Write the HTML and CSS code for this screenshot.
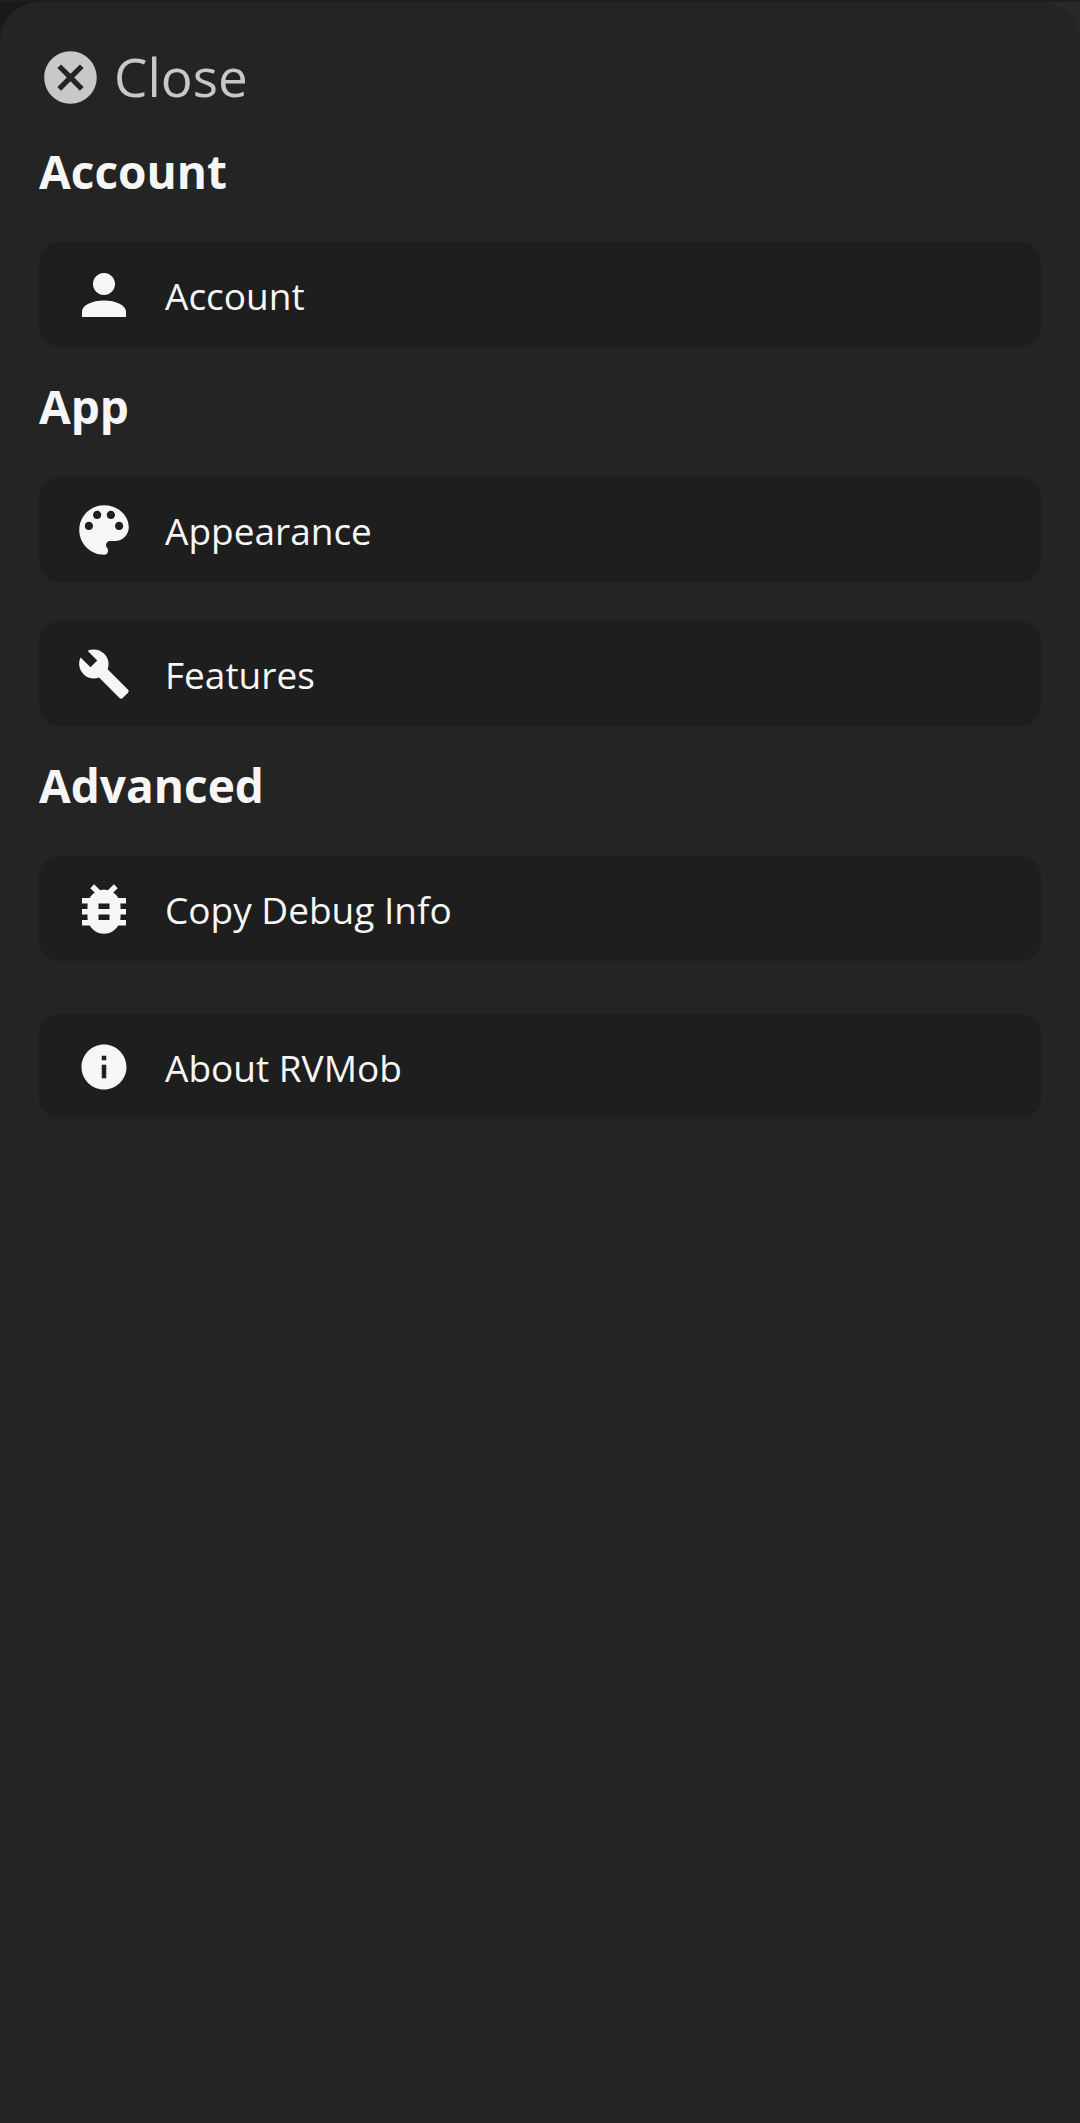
FILE: index.html
```
<!DOCTYPE html>
<html lang="en">
<head>
<meta charset="utf-8">
<meta name="viewport" content="width=device-width, initial-scale=1">
<title>Settings</title>
<link rel="stylesheet" href="styles.css">
</head>
<body>
<main class="sheet">
  <button class="close" type="button">
    <svg class="close-icon" viewBox="0 0 24 24" aria-hidden="true"><path d="M12 2C6.470 2 2 6.470 2 12s4.470 10 10 10 10-4.470 10-10S17.530 2 12 2zm5 13.590L15.590 17 12 13.410 8.410 17 7 15.590 10.590 12 7 8.410 8.410 7 12 10.590 15.590 7 17 8.410 13.410 12 17 15.590z"/></svg>
    <span>Close</span>
  </button>

  <section class="group">
    <h2 class="heading">Account</h2>
    <button class="item" type="button">
      <span class="icon-box"><svg class="icon" viewBox="0 0 24 24" aria-hidden="true"><path d="M12 12c2.210 0 4-1.790 4-4s-1.790-4-4-4-4 1.790-4 4 1.790 4 4 4zm0 2c-4.420 0-8 1.790-8 4v2h16v-2c0-2.210-3.580-4-8-4z"/></svg></span>
      <span class="label">Account</span>
    </button>
  </section>

  <section class="group">
    <h2 class="heading">App</h2>
    <button class="item" type="button">
      <span class="icon-box"><svg class="icon" viewBox="0 0 24 24" aria-hidden="true"><path d="M12 3c-4.970 0-9 4.030-9 9s4.030 9 9 9c.83 0 1.500-.67 1.500-1.500 0-.39-.15-.74-.39-1.010-.23-.26-.38-.61-.38-.99 0-.83.67-1.500 1.500-1.500H16c2.760 0 5-2.240 5-5 0-4.420-4.030-8-9-8zm-5.500 9c-.83 0-1.500-.67-1.500-1.500S5.670 9 6.500 9 8 9.670 8 10.500 7.330 12 6.500 12zm3-4C8.670 8 8 7.330 8 6.500S8.670 5 9.500 5s1.500.67 1.500 1.500S10.330 8 9.500 8zm5 0c-.83 0-1.500-.67-1.500-1.500S13.670 5 14.500 5s1.500.67 1.500 1.500S15.330 8 14.500 8zm3 4c-.83 0-1.500-.67-1.500-1.500S16.670 9 17.500 9s1.500.67 1.500 1.500-.67 1.500-1.500 1.500z"/></svg></span>
      <span class="label">Appearance</span>
    </button>
    <button class="item" type="button">
      <span class="icon-box"><svg class="icon-small" viewBox="0 0 24 24" aria-hidden="true"><path d="M22.700 19l-9.100-9.100c.9-2.300.4-5-1.500-6.900-2-2-5-2.400-7.400-1.300L9 6 6 9 1.600 4.700C.4 7.100.9 10.100 2.900 12.100c1.900 1.900 4.600 2.400 6.900 1.500l9.100 9.100c.4.4 1 .4 1.400 0l2.300-2.300c.5-.4.5-1.100.1-1.400z"/></svg></span>
      <span class="label">Features</span>
    </button>
  </section>

  <section class="group">
    <h2 class="heading">Advanced</h2>
    <button class="item" type="button">
      <span class="icon-box"><svg class="icon" viewBox="0 0 24 24" aria-hidden="true"><path d="M20 8h-2.810c-.45-.78-1.070-1.450-1.820-1.960L17 4.410 15.590 3l-2.170 2.170C12.960 5.060 12.490 5 12 5s-.96.06-1.410.17L8.410 3 7 4.410l1.620 1.630C7.880 6.550 7.260 7.220 6.810 8H4v2h2.090c-.05.33-.09.66-.09 1v1H4v2h2v1c0 .34.04.67.09 1H4v2h2.810c1.040 1.790 2.970 3 5.190 3s4.150-1.210 5.190-3H20v-2h-2.090c.05-.33.09-.66.09-1v-1h2v-2h-2v-1c0-.34-.04-.67-.09-1H20V8zm-6 8h-4v-2h4v2zm0-4h-4v-2h4v2z"/></svg></span>
      <span class="label">Copy Debug Info</span>
    </button>
  </section>

  <footer class="about">
    <button class="item" type="button">
      <span class="icon-box"><svg class="icon-small" viewBox="0 0 24 24" aria-hidden="true"><path d="M12 2C6.480 2 2 6.480 2 12s4.480 10 10 10 10-4.480 10-10S17.520 2 12 2zm1 15h-2v-6h2v6zm0-8h-2V7h2v2z"/></svg></span>
      <span class="label">About RVMob</span>
    </button>
  </footer>
</main>
</body>
</html>
```
FILE: styles.css
```
* {
  box-sizing: border-box;
}

body {
  margin: 0;
  min-height: 100vh;
  display: flex;
  flex-direction: column;
  border-top: 2px solid #1e1e1e;
  background: linear-gradient(to right, #191919 50%, #282828 50%);
  color: #f6f6f6;
  font-family: "Open Sans", "Noto Sans", sans-serif;
}

.sheet {
  flex: 1;
  padding: 40px 39px;
  border-radius: 39px 39px 0 0;
  background: #242424;
}

button {
  margin: 0;
  border: 0;
  font-family: inherit;
  text-align: left;
  cursor: pointer;
}

svg {
  display: block;
  fill: currentColor;
}

.close {
  display: flex;
  align-items: center;
  gap: 12px;
  padding: 0;
  background: none;
  color: #c8c8c8;
  font-size: 53px;
  line-height: 70px;
}

.close-icon {
  width: 63px;
  height: 63px;
}

.group {
  display: flex;
  flex-direction: column;
}

.heading {
  margin: 27px 0 39px;
  font-size: 46px;
  font-weight: 700;
  line-height: 64px;
}

.item {
  display: flex;
  align-items: center;
  gap: 28px;
  width: 100%;
  height: 105px;
  padding: 0 32px;
  border-radius: 21px;
  background: #1e1e1e;
  color: inherit;
  font-size: 37px;
  line-height: 50px;
}

.item + .item {
  margin-top: 39px;
}

.label {
  padding-top: 2px;
}

.icon-box {
  display: grid;
  place-items: center;
  width: 66px;
  height: 66px;
}

.icon {
  width: 66px;
  height: 66px;
}

.icon-small {
  width: 54px;
  height: 54px;
}

.about {
  margin-top: 53px;
}
```
